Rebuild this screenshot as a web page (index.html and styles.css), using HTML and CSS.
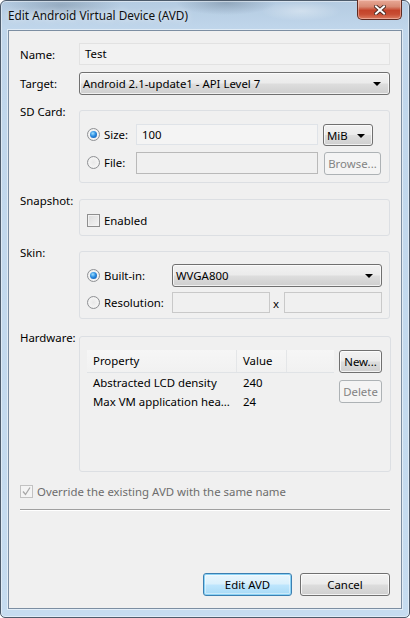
FILE: index.html
```html
<!DOCTYPE html>
<html>
<head>
<meta charset="utf-8">
<title>Edit Android Virtual Device (AVD)</title>
<link rel="stylesheet" href="styles.css">
</head>
<body>
<div class="window">
  <div class="titlebar">
    <span class="title">Edit Android Virtual Device (AVD)</span>
    <span class="close">
      <svg width="12" height="10" viewBox="0 0 12 10">
        <path d="M2 1.5 L10 8.5 M10 1.5 L2 8.5" stroke="#4a2a22" stroke-width="3.8" stroke-linecap="square"/>
        <path d="M2 1.5 L10 8.5 M10 1.5 L2 8.5" stroke="#ffffff" stroke-width="2" stroke-linecap="square"/>
      </svg>
    </span>
  </div>
  <div class="client">
    <div class="row row-name">
      <span class="lbl">Name:</span>
      <div class="field field-ro">Test</div>
    </div>
    <div class="row row-target">
      <span class="lbl">Target:</span>
      <div class="combo"><span class="combo-text">Android 2.1-update1 - API Level 7</span><span class="arrow"></span></div>
    </div>
    <div class="row row-top row-sd">
      <span class="lbl">SD Card:</span>
      <div class="group group-sd">
        <label class="opt"><span class="radio on"></span>Size:</label>
        <div class="field field-light">100</div>
        <div class="combo combo-mib"><span class="combo-text">MiB</span><span class="arrow"></span></div>
        <label class="opt"><span class="radio"></span>File:</label>
        <div class="field field-dis"></div>
        <div class="btn btn-dis btn-browse">Browse...</div>
      </div>
    </div>
    <div class="row row-top row-snap">
      <span class="lbl">Snapshot:</span>
      <div class="group group-snap">
        <label class="opt"><span class="check"></span>Enabled</label>
      </div>
    </div>
    <div class="row row-top row-skin">
      <span class="lbl">Skin:</span>
      <div class="group group-skin">
        <label class="opt"><span class="radio on"></span>Built-in:</label>
        <div class="combo combo-skin"><span class="combo-text">WVGA800</span><span class="arrow"></span></div>
        <label class="opt"><span class="radio"></span>Resolution:</label>
        <div class="res">
          <div class="field field-mid"></div>
          <span class="x">x</span>
          <div class="field field-mid"></div>
        </div>
      </div>
    </div>
    <div class="row row-top row-hw">
      <span class="lbl">Hardware:</span>
      <div class="group group-hw">
        <div class="table">
          <div class="thead">
            <span class="th th-prop">Property</span>
            <span class="th th-val">Value</span>
            <span class="th th-fill"></span>
          </div>
          <div class="tr"><span class="td td-prop">Abstracted LCD density</span><span class="td">240</span></div>
          <div class="tr"><span class="td td-prop">Max VM application hea...</span><span class="td">24</span></div>
        </div>
        <div class="side">
          <div class="btn btn-small">New...</div>
          <div class="btn btn-small btn-dis">Delete</div>
        </div>
      </div>
    </div>
    <label class="override"><span class="check check-dis"><svg width="11" height="11" viewBox="0 0 11 11"><path d="M2 5.5 L4.5 8.5 L9 1.5" fill="none" stroke="#a8a8a8" stroke-width="1.3"/></svg></span>Override the existing AVD with the same name</label>
    <div class="sep"></div>
    <div class="spacer"></div>
    <div class="buttons">
      <div class="btn btn-default btn-main">Edit AVD</div>
      <div class="btn btn-main">Cancel</div>
    </div>
  </div>
</div>
</body>
</html>
```
FILE: styles.css
```css
html, body {
  margin: 0;
  padding: 0;
  background: #ffffff;
}
body {
  font-family: "Noto Sans", "Open Sans", sans-serif;
  font-size: 11.4px;
  color: #000;
}
.window {
  box-sizing: border-box;
  width: 410px;
  height: 618px;
  border: 1px solid #4d5b6b;
  border-radius: 6px 6px 5px 5px;
  background:
    radial-gradient(ellipse 60px 14px at 60px 4px, rgba(90,110,130,0.35), transparent),
    radial-gradient(ellipse 50px 12px at 225px 2px, rgba(80,100,120,0.35), transparent),
    radial-gradient(ellipse 40px 10px at 300px 10px, rgba(255,255,255,0.35), transparent),
    linear-gradient(to bottom, #b4cbe1 0, #c0d6eb 28px, #c6dcf0 100%);
  display: flex;
  flex-direction: column;
  box-shadow: inset 0 0 0 1px rgba(255,255,255,0.45);
}
.titlebar {
  height: 29px;
  display: flex;
  justify-content: space-between;
  align-items: flex-start;
  flex: none;
}
.title {
  margin: 6px 0 0 7px;
  line-height: 16px;
  font-size: 11.8px;
  color: #101010;
  text-shadow: 0 0 6px rgba(255,255,255,0.9);
}
.close {
  box-sizing: border-box;
  margin: -1px 7px 0 0;
  width: 45px;
  height: 20px;
  border: 1px solid #5f2a20;
  border-top: none;
  border-radius: 0 0 5px 5px;
  background: linear-gradient(to bottom, #e9a997 0, #d88a74 35%, #c4432a 55%, #c84d33 75%, #dc7c60 100%);
  box-shadow: inset 0 0 0 1px rgba(255,220,210,0.45);
  display: flex;
  align-items: center;
  justify-content: center;
}
.client {
  flex: 1;
  margin: 0 7px 8px 7px;
  border: 1px solid #7c8ea2;
  background: #f0f0f0;
  padding: 12px 11px 12px 11px;
  display: flex;
  flex-direction: column;
  box-shadow: 0 0 0 1px rgba(255,255,255,0.5);
}
.row {
  display: grid;
  grid-template-columns: 59px 1fr;
  align-items: center;
}
.row-top { align-items: start; }
.row-target { margin-top: 7px; }
.row-sd { margin-top: 15px; }
.row-snap { margin-top: 16px; }
.row-skin { margin-top: 15px; }
.row-hw { margin-top: 17px; }
.lbl {
  line-height: 15px;
  white-space: nowrap;
}
.row-top .lbl { margin-top: -6px; }

.field {
  box-sizing: border-box;
  height: 21px;
  line-height: 19px;
  padding: 0 5px;
  border: 1px solid #d9dde2;
  background: #f4f4f4;
  white-space: nowrap;
}
.field-ro {
  height: 22px;
  line-height: 20px;
  border-color: #e2e2e2;
  background: #f2f2f2;
}
.field-light {
  border-color: #dfe3e8;
  background: #f4f4f4;
}
.field-dis {
  height: 22px;
  border-color: #b9b9b9;
  background: #f0f0f0;
}
.field-mid {
  border-color: #c9c9c9;
  background: #f0f0f0;
}

.combo {
  box-sizing: border-box;
  height: 23px;
  border: 1px solid #707070;
  border-radius: 3px;
  background: linear-gradient(to bottom, #f2f2f2 0, #ebebeb 48%, #dddddd 52%, #cfcfcf 100%);
  box-shadow: inset 0 0 0 1px rgba(255,255,255,0.7);
  display: flex;
  align-items: center;
  justify-content: space-between;
  padding: 0 8px 0 3px;
}
.combo-text {
  line-height: 15px;
  white-space: nowrap;
}
.arrow {
  width: 0;
  height: 0;
  border-left: 4px solid transparent;
  border-right: 4px solid transparent;
  border-top: 4px solid #000;
  margin-top: 1px;
}
.combo-mib {
  width: 50px;
  height: 22px;
  padding: 0 7px 0 3px;
}

.group {
  box-sizing: border-box;
  border: 1px solid #dcdfe3;
  border-radius: 3px;
}
.group-sd {
  display: grid;
  grid-template-columns: 44px 1fr 58px;
  grid-template-rows: 22px 23px;
  column-gap: 5px;
  row-gap: 6px;
  align-items: start;
  padding: 13px 8px 7px 7px;
  height: 73px;
}
.group-snap {
  height: 37px;
  padding: 13px 8px 7px 7px;
}
.group-skin {
  display: grid;
  grid-template-columns: 85px 1fr;
  grid-template-rows: 23px 21px;
  row-gap: 5px;
  align-items: center;
  padding: 12px 7px 5px 7px;
  height: 68px;
}
.group-hw {
  display: flex;
  gap: 5px;
  padding: 13px 8px 6px 7px;
  height: 136px;
}

.opt {
  display: flex;
  align-items: center;
  height: 21px;
  line-height: 15px;
  white-space: nowrap;
}
.group-snap .opt { height: 15px; }
.radio {
  box-sizing: border-box;
  width: 13px;
  height: 13px;
  border-radius: 50%;
  border: 1px solid #8f9194;
  background: radial-gradient(circle at 50% 50%, #e8e8e8 0, #f4f4f4 60%, #dcdcdc 100%);
  margin-right: 4px;
  flex: none;
  position: relative;
}
.radio.on::after {
  content: "";
  position: absolute;
  left: 2px;
  top: 2px;
  width: 7px;
  height: 7px;
  border-radius: 50%;
  background: radial-gradient(circle at 40% 35%, #9fe0ff 0, #2b8ce0 45%, #0d4fa8 100%);
}
.check {
  box-sizing: border-box;
  width: 13px;
  height: 13px;
  border: 1px solid #8f8f8f;
  background: linear-gradient(135deg, #dcdcdc 0, #f4f4f4 100%);
  box-shadow: inset 0 0 0 1px #f2f2f2;
  margin-right: 4px;
  flex: none;
  display: flex;
  align-items: center;
  justify-content: center;
}
.check-dis {
  border-color: #c2c2c2;
  background: #f4f4f4;
  box-shadow: none;
}

.res {
  display: grid;
  grid-template-columns: 98px 1fr 98px;
  align-items: center;
}
.x {
  text-align: center;
  line-height: 15px;
  margin-top: 2px;
  padding-right: 2px;
}

.table {
  width: 247px;
  flex: none;
  height: 115px;
}
.thead {
  display: grid;
  grid-template-columns: 150px 50px 1fr;
  height: 22px;
  border-bottom: 1px solid #e0e3e6;
  background: linear-gradient(to bottom, #f6f6f6 0, #f1f1f1 100%);
}
.th {
  line-height: 22px;
  padding-left: 6px;
  border-right: 1px solid #e4e6e8;
}
.th-fill { border-right: none; }
.tr {
  display: grid;
  grid-template-columns: 150px 1fr;
  height: 19px;
  line-height: 19px;
}
.td {
  padding-left: 6px;
  white-space: nowrap;
}
.side {
  display: flex;
  flex-direction: column;
  gap: 7px;
  width: 43px;
}

.btn {
  box-sizing: border-box;
  height: 23px;
  border: 1px solid #707070;
  border-radius: 3px;
  background: linear-gradient(to bottom, #f2f2f2 0, #ebebeb 48%, #dddddd 52%, #cfcfcf 100%);
  box-shadow: inset 0 0 0 1px rgba(255,255,255,0.75);
  display: flex;
  align-items: center;
  justify-content: center;
  line-height: 15px;
  white-space: nowrap;
}
.btn-dis {
  border-color: #adb2b5;
  background: #f4f4f4;
  color: #838383;
  box-shadow: none;
}
.btn-browse {
  width: 57px;
  margin-left: 1px;
}
.btn-small {
  width: 43px;
}
.btn-default {
  border-color: #3c7fb1;
  background: linear-gradient(to bottom, #eaf6fd 0, #d9f0fc 48%, #bee6fd 52%, #a7d9f5 100%);
  box-shadow: inset 0 0 0 1px #8ad2f5, inset 0 0 0 2px rgba(255,255,255,0.4);
}
.override {
  display: flex;
  align-items: center;
  margin-top: 12px;
  height: 15px;
  color: #6d6d6d;
  white-space: nowrap;
}
.sep {
  margin-top: 10px;
  height: 0;
  border-top: 1px solid #a0a0a0;
  border-bottom: 1px solid #ffffff;
}
.spacer { flex: 1; }
.buttons {
  display: flex;
  justify-content: flex-end;
  gap: 8px;
}
.btn-main {
  width: 89px;
}
.btn-main + .btn-main { width: 90px; }
```
